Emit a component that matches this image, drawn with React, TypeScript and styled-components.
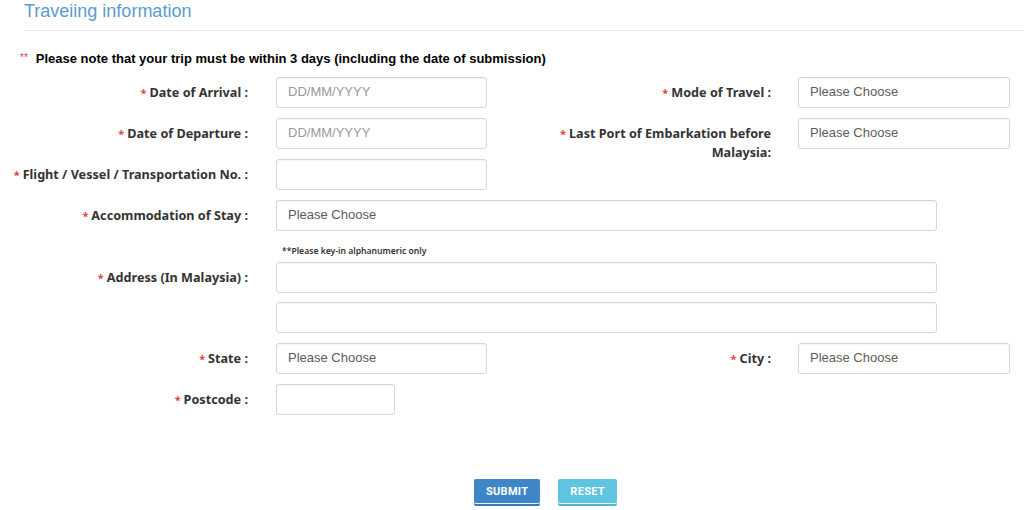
import React from "react";
import styled, { createGlobalStyle } from "styled-components";

const GlobalStyle = createGlobalStyle`
  html, body { margin: 0; padding: 0; background: #fff; }
  body { font-family: "Liberation Sans", Arial, sans-serif; color: #333; }
  * { box-sizing: border-box; }
`;

const Page = styled.div`
  width: 1024px;
  height: 510px;
  overflow: hidden;
  background: #fff;
`;

const Header = styled.div`
  margin-left: 24px;
  padding-top: 1px;
  height: 31px;
  border-bottom: 1px solid #e6e6e6;
`;

const Title = styled.h3`
  margin: 0;
  font-family: "Liberation Sans", Arial, sans-serif;
  font-weight: 400;
  font-size: 18px;
  line-height: 20px;
  color: #5b9bd1;
`;

const Notice = styled.p`
  margin: 19px 0 0 20px;
  font-family: "Liberation Sans", Arial, sans-serif;
  font-size: 13px;
  font-weight: 700;
  line-height: 18px;
  color: #000;
  display: flex;
  align-items: baseline;
  gap: 8px;
`;

const Stars = styled.span`
  color: #e0403c;
  font-size: 10px;
  font-weight: 400;
  position: relative;
  top: -2px;
`;

const Form = styled.div<{ $top?: number }>`
  margin-top: ${(p) => p.$top ?? 0}px;
  display: flex;
  flex-direction: column;
  gap: 10px;
`;

const Row = styled.div<{ $tall?: boolean }>`
  display: flex;
  align-items: flex-start;
  height: ${(p) => (p.$tall ? "auto" : "31px")};
`;

const Pair = styled.div<{ $width?: number }>`
  display: flex;
  align-items: flex-start;
  width: ${(p) => (p.$width ? `${p.$width}px` : "auto")};
`;

const Label = styled.label<{ $width: number; $inset?: number }>`
  width: ${(p) => p.$width}px;
  padding-left: ${(p) => p.$inset ?? 0}px;
  padding-top: 6px;
  text-align: right;
  font-family: "Noto Sans", "Open Sans", sans-serif;
  font-weight: 700;
  font-size: 12.65px;
  line-height: 19px;
  color: #333;
  flex-shrink: 0;
`;

const Req = styled.span`
  color: #e0403c;
  font-size: 11px;
  margin-right: 3px;
`;

const FieldCol = styled.div`
  display: flex;
  flex-direction: column;
  gap: 9px;
  margin-left: 28px;
`;

const Input = styled.div<{ $width: number; $muted?: boolean; $gap?: number }>`
  width: ${(p) => p.$width}px;
  height: 31px;
  margin-left: ${(p) => p.$gap ?? 28}px;
  padding: 0 11px 2px;
  border: 1px solid #d6d6d6;
  border-radius: 3px;
  background: #fff;
  box-shadow: inset 0 1px 1px rgba(0, 0, 0, 0.04);
  display: flex;
  align-items: center;
  font-family: "Liberation Sans", Arial, sans-serif;
  font-size: 13px;
  color: ${(p) => (p.$muted ? "#9a9a9a" : "#5c5c5c")};
  flex-shrink: 0;
`;

const Hint = styled.div`
  height: 31px;
  margin-left: 282px;
  padding-top: 14px;
  font-family: "Noto Sans", "Open Sans", sans-serif;
  font-size: 8.6px;
  font-weight: 600;
  line-height: 12px;
  color: #333;
`;

const Actions = styled.div`
  display: flex;
  justify-content: center;
  gap: 18px;
  margin-top: 64px;
  padding-left: 67px;
`;

const Button = styled.button<{ $tone: "primary" | "info" }>`
  height: 24px;
  border: none;
  border-radius: 2px;
  padding: 0 12px;
  font-family: Roboto, "Liberation Sans", sans-serif;
  font-weight: 700;
  font-size: 11px;
  letter-spacing: 0.3px;
  color: #fff;
  background: ${(p) => (p.$tone === "primary" ? "#3f86c9" : "#5ec4e0")};
  box-shadow: 0 1px 0 #e8f2fa,
    0 3px 0 ${(p) => (p.$tone === "primary" ? "#3a78b5" : "#55b4d0")};
`;

function Field({
  label,
  width,
  value,
  muted,
}: {
  label: string;
  width: number;
  value?: string;
  muted?: boolean;
}) {
  return (
    <Pair>
      <Label $width={248}>
        <Req>*</Req>
        {label}
      </Label>
      <Input $width={width} $muted={muted}>
        {value}
      </Input>
    </Pair>
  );
}

function RightField({ label, value }: { label: string; value?: string }) {
  return (
    <Pair>
      <Label $width={269} $inset={37}>
        <Req>*</Req>
        {label}
      </Label>
      <Input $width={212} $gap={27}>
        {value}
      </Input>
    </Pair>
  );
}

export default function App() {
  return (
    <Page>
      <GlobalStyle />
      <Header>
        <Title>Traveiing information</Title>
      </Header>
      <Notice>
        <Stars>**</Stars>
        Please note that your trip must be within 3 days (including the date of submission)
      </Notice>
      <Form $top={8}>
        <Row>
          <Pair $width={502}>
            <Field label="Date of Arrival :" width={211} value="DD/MM/YYYY" muted />
          </Pair>
          <RightField label="Mode of Travel :" value="Please Choose" />
        </Row>
        <Row>
          <Pair $width={502}>
            <Field label="Date of Departure :" width={211} value="DD/MM/YYYY" muted />
          </Pair>
          <RightField label="Last Port of Embarkation before Malaysia:" value="Please Choose" />
        </Row>
        <Row>
          <Field label="Flight / Vessel / Transportation No. :" width={211} />
        </Row>
        <Row>
          <Field label="Accommodation of Stay :" width={661} value="Please Choose" />
        </Row>
      </Form>
      <Hint>**Please key-in alphanumeric only</Hint>
      <Form>
        <Row $tall>
          <Pair>
            <Label $width={248}>
              <Req>*</Req>
              Address (In Malaysia) :
            </Label>
            <FieldCol>
              <Input $width={661} $gap={0} />
              <Input $width={661} $gap={0} />
            </FieldCol>
          </Pair>
        </Row>
        <Row>
          <Pair $width={502}>
            <Field label="State :" width={211} value="Please Choose" />
          </Pair>
          <RightField label="City :" value="Please Choose" />
        </Row>
        <Row>
          <Field label="Postcode :" width={119} />
        </Row>
      </Form>
      <Actions>
        <Button $tone="primary">SUBMIT</Button>
        <Button $tone="info">RESET</Button>
      </Actions>
    </Page>
  );
}
